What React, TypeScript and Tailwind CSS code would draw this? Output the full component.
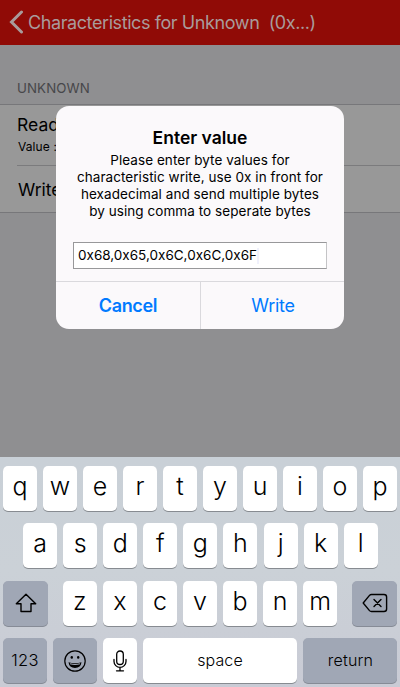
import React from 'react';

type KeyProps = { children: React.ReactNode; className?: string; dark?: boolean };

function Key({ children, className = 'w-[34px]', dark = false }: KeyProps) {
  return (
    <div
      className={`flex h-[45px] shrink-0 items-center justify-center rounded-[5px] ${
        dark ? 'bg-[#a0a7b5] shadow-[0_1px_0_#868b96]' : 'bg-white shadow-[0_1px_0_#878b91]'
      } ${className}`}
    >
      {children}
    </div>
  );
}

function Letter({ ch }: { ch: string }) {
  return (
    <Key>
      <span className="-mt-[5px] text-[25px] leading-[30px] font-[350]">{ch}</span>
    </Key>
  );
}

export default function App() {
  return (
    <div
      className="relative flex h-[687px] w-[400px] flex-col overflow-hidden bg-[#8f8f91] text-black"
      style={{ fontFamily: 'Inter, "Liberation Sans", sans-serif' }}
    >
      <header className="flex h-[45px] shrink-0 items-center bg-[#900b06] pl-[9px] text-[#a99b9b]">
        <svg width="15" height="24" viewBox="0 0 15 24" fill="none" className="mt-[-2px]">
          <path d="M12.5 2 L2.5 12 L12.5 22" stroke="currentColor" strokeWidth="3" strokeLinecap="round" />
        </svg>
        <h1 className="ml-[4px] text-[18px] leading-[22px] font-normal tracking-[-0.41px] whitespace-pre">
          Characteristics for Unknown  (0x...)
        </h1>
      </header>

      <main className="flex h-[412px] shrink-0 flex-col">
        <div className="h-[59px] pt-[35px] pl-[17px] text-[13.3px] leading-[17px] tracking-[0.1px] text-[#47474a]">UNKNOWN</div>
        <div className="h-[109px] border-y border-[#77777a] bg-[#989898] pl-[17px]">
          <div className="h-[61px] border-b border-[#7b7b7d] pt-[9px]">
            <div className="text-[17.5px] leading-[22px]">Read</div>
            <div className="pl-px text-[12px] leading-[22px] tracking-[0.1px]">Value :</div>
          </div>
          <div className="pt-[13px] pl-px text-[17.5px] leading-[22px]">Write</div>
        </div>
      </main>

      <section className="flex h-[230px] shrink-0 flex-col gap-[12px] bg-linear-to-b from-[#c9d0d7] via-[#cbd1d7] to-[#c9cbd5] px-[3px] pt-[9px]">
        <div className="flex gap-[6px]">
          {'qwertyuiop'.split('').map((c) => <Letter key={c} ch={c} />)}
        </div>
        <div className="flex gap-[6.1px] pl-[20px]">
          {'asdfghjkl'.split('').map((c) => <Letter key={c} ch={c} />)}
        </div>
        <div className="mt-[1px] flex justify-between">
          <Key dark className="w-[45px]">
            <svg width="22" height="20" viewBox="0 0 22 20" fill="none" stroke="#000" strokeWidth="1.4" strokeLinejoin="round" className="-mt-[2px]">
              <path d="M11 1.3 L20.7 10.8 H16 V18.5 H6 V10.8 H1.3 Z" />
            </svg>
          </Key>
          <div className="flex gap-[6.1px]">
            {'zxcvbnm'.split('').map((c) => <Letter key={c} ch={c} />)}
          </div>
          <Key dark className="w-[45px]">
            <svg width="26" height="20" viewBox="0 0 26 20" fill="none" stroke="#000" strokeWidth="1.4" strokeLinejoin="round" strokeLinecap="round" className="-mt-[1px]">
              <path d="M9.5 1.5 H22 Q24.6 1.5 24.6 4 V16 Q24.6 18.5 22 18.5 H9.5 Q8.3 18.5 7.5 17.6 L1.2 10 L7.5 2.4 Q8.3 1.5 9.5 1.5 Z" />
              <path d="M12 6.4 L19 13.6 M19 6.4 L12 13.6" />
            </svg>
          </Key>
        </div>
        <div className="flex gap-[6px]">
          <Key dark className="w-[44px]"><span className="text-[16.5px] font-[350] tracking-[0.3px]">123</span></Key>
          <Key dark className="w-[44px]">
            <svg width="22" height="22" viewBox="0 0 22 22" fill="none" stroke="#000" strokeWidth="1.2">
              <circle cx="11" cy="11" r="10.2" />
              <path d="M4.5 12.3 Q11 14.3 17.5 12.3 Q16.8 17.9 11 17.9 Q5.2 17.9 4.5 12.3 Z" fill="#000" stroke="none" />
              <path d="M6 13.8 Q11 15.2 16 13.8" stroke="#a0a7b5" strokeWidth="1.1" />
              <ellipse cx="7.8" cy="7.4" rx="1.2" ry="1.4" fill="#000" stroke="none" />
              <ellipse cx="14.2" cy="7.4" rx="1.2" ry="1.4" fill="#000" stroke="none" />
            </svg>
          </Key>
          <Key>
            <svg width="14" height="22" viewBox="0 0 14 22" fill="none" stroke="#000" strokeWidth="1.3" strokeLinecap="round">
              <rect x="3.7" y="1" width="6.6" height="13.5" rx="3.3" />
              <path d="M1 9.5 V11.5 A6 5.8 0 0 0 13 11.5 V9.5 M7 17.3 V20.8 M3.5 20.8 H10.5" />
            </svg>
          </Key>
          <Key className="w-[154px]"><span className="-mt-[2px] text-[16px] font-[350] tracking-[0.1px]">space</span></Key>
          <Key dark className="w-[94px]"><span className="-mt-[2px] pl-px text-[16px] font-[350] tracking-[0.2px]">return</span></Key>
        </div>
      </section>

      <div role="dialog" className="absolute top-[106px] left-[56px] flex h-[223px] w-[288px] flex-col rounded-[13px] bg-[#fbf9fb]">
        <h2 className="pt-[20px] text-center text-[17.5px] leading-[24px] font-semibold">Enter value</h2>
        <div className="mt-[2px] text-center text-[13.5px] leading-[17px] tracking-[0.06px] whitespace-nowrap">
          <div>Please enter byte values for</div>
          <div>characteristic write, use 0x in front for</div>
          <div>hexadecimal and send multiple bytes</div>
          <div>by using comma to seperate bytes</div>
        </div>
        <div className="mx-[17px] mt-[22px] flex h-[27px] items-center border border-[#98989a] border-r-[#c4c4c6] bg-white pl-[4px] text-[13.5px]">
          <span>0x68,0x65,0x6C,0x6C,0x6F</span>
          <span className="h-[16px] w-[2px] bg-[#f0f1fc]" />
        </div>
        <div className="mt-auto flex h-[48px] border-t border-[#dad9dd] text-[18px] text-[#007aff]">
          <div className="flex w-[145px] items-center justify-center border-r border-[#dad9dd] font-semibold tracking-[-0.35px]">Cancel</div>
          <div className="flex flex-1 items-center justify-center pl-px tracking-[-0.3px]">Write</div>
        </div>
      </div>
    </div>
  );
}
